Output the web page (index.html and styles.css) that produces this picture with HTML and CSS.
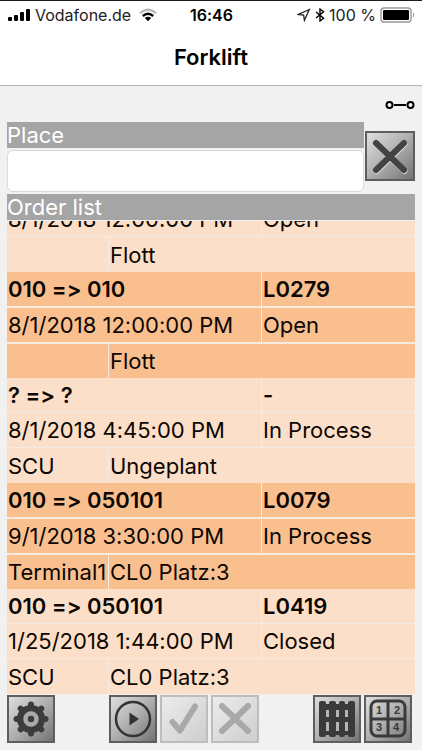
FILE: index.html
```html
<!DOCTYPE html>
<html lang="en">
<head>
<meta charset="utf-8">
<meta name="viewport" content="width=device-width, initial-scale=1">
<title>Forklift</title>
<link rel="stylesheet" href="styles.css">
</head>
<body>
<header class="top">
  <div class="status">
    <div class="status-side">
      <svg class="signal" viewBox="0 0 24 14" width="24" height="14"><rect x="1" y="9" width="4" height="4" rx="1"/><rect x="7" y="7" width="4" height="6" rx="1"/><rect x="13" y="4" width="4" height="9" rx="1"/><rect x="19" y="1" width="4" height="12" rx="1"/></svg>
      <span class="carrier">Vodafone.de</span>
      <svg viewBox="0 0 18 14" width="18" height="14" fill="none" stroke-width="2.4"><path d="M1 5.2Q9-1.8 17 5.2" stroke="#b9b9b9"/><path d="M3.8 8Q9 3.4 14.2 8" stroke="#000"/><path d="M5.8 10Q9 7.600 12.2 10L9 13.2z" fill="#000"/></svg>
    </div>
    <time class="clock">16:46</time>
    <div class="status-side status-right">
      <svg viewBox="0 0 14 14" width="14" height="14" fill="none" stroke="#222" stroke-width="1.3"><path d="M12.3 1.5L1.4 6.4L6.6 7L7.4 12.3z"/></svg>
      <svg viewBox="0 0 10 14" width="10" height="14" fill="none" stroke="#000" stroke-width="1.4"><path d="M1 4L8.6 10.2L5 13V1L8.6 3.8L1 10"/></svg>
      <span>100 %</span>
      <svg viewBox="0 0 36 16" width="36" height="16"><rect x="1" y="1" width="30" height="14" rx="3" fill="#fff" stroke="#999" stroke-width="1.4"/><rect x="3" y="3" width="26" height="10" rx="1" fill="#000"/><path d="M33 5.5Q35.4 8 33 10.5z" fill="#999"/></svg>
    </div>
  </div>
  <h1>Forklift</h1>
</header>
<main>
  <div class="link-state">
    <svg viewBox="0 0 30 10" width="30" height="10" fill="none" stroke="#000" stroke-width="2"><circle cx="4.5" cy="5" r="3"/><circle cx="25.5" cy="5" r="3"/><path d="M9 5H21"/></svg>
  </div>
  <form class="place">
    <div class="field">
      <label class="bar" for="place">Place</label>
      <input id="place" type="text">
    </div>
    <button class="tile clear" type="button" aria-label="Clear">
      <svg viewBox="2 2 46 46"><path d="M11.500 13L39.500 40M39.500 13L11.500 40" stroke="#ddd" stroke-width="6" stroke-linecap="round"/><path d="M11 12L39 39M39 12L11 39" stroke="#434343" stroke-width="6" stroke-linecap="round"/></svg>
    </button>
  </form>
  <h2 class="bar">Order list</h2>
  <div class="list">
    <table>
      <colgroup><col class="c1"><col class="c2"><col class="c2"></colgroup>
      <tbody class="light">
        <tr><td colspan="2">8/1/2018 12:00:00 PM</td><td>Open</td></tr>
        <tr><td></td><td colspan="2">Flott</td></tr>
      </tbody>
      <tbody class="dark">
        <tr><th colspan="2">010 =&gt; 010</th><th>L0279</th></tr>
        <tr><td colspan="2">8/1/2018 12:00:00 PM</td><td>Open</td></tr>
        <tr><td></td><td colspan="2">Flott</td></tr>
      </tbody>
      <tbody class="light">
        <tr><th colspan="2">? =&gt; ?</th><th>-</th></tr>
        <tr><td colspan="2">8/1/2018 4:45:00 PM</td><td>In Process</td></tr>
        <tr><td>SCU</td><td colspan="2">Ungeplant</td></tr>
      </tbody>
      <tbody class="dark">
        <tr><th colspan="2">010 =&gt; 050101</th><th>L0079</th></tr>
        <tr><td colspan="2">9/1/2018 3:30:00 PM</td><td>In Process</td></tr>
        <tr><td>Terminal1</td><td colspan="2">CL0 Platz:3</td></tr>
      </tbody>
      <tbody class="light">
        <tr><th colspan="2">010 =&gt; 050101</th><th>L0419</th></tr>
        <tr><td colspan="2">1/25/2018 1:44:00 PM</td><td>Closed</td></tr>
        <tr><td>SCU</td><td colspan="2">CL0 Platz:3</td></tr>
      </tbody>
    </table>
  </div>
  <div class="tools">
    <button class="tile" type="button" aria-label="Settings">
      <svg viewBox="2 2 44 44"><circle cx="24" cy="24" r="14" fill="#3c3c3c"/><path d="M24 9.500V38.500M9.500 24H38.500M13.700 13.700L34.300 34.300M34.300 13.700L13.700 34.300" stroke="#3c3c3c" stroke-width="6" stroke-linecap="round"/><circle cx="24" cy="24" r="5.500" fill="#3c3c3c" stroke="#aaa" stroke-width="4.500"/></svg>
    </button>
    <button class="tile col3" type="button" aria-label="Start">
      <svg viewBox="2 2 44 44"><circle cx="24" cy="24" r="17" fill="none" stroke="#333" stroke-width="2.500"/><path d="M20.500 17.500V30.500L30 24z" fill="#333"/></svg>
    </button>
    <button class="tile" type="button" aria-label="Confirm" disabled>
      <svg viewBox="2 2 44 44" fill="none" stroke="#a9a9a9" stroke-width="6" stroke-linecap="round" stroke-linejoin="round"><path d="M12.500 27L20 35.500L35 11.500"/></svg>
    </button>
    <button class="tile" type="button" aria-label="Cancel" disabled>
      <svg viewBox="2 2 44 44" fill="none" stroke="#a9a9a9" stroke-width="6" stroke-linecap="round"><path d="M11 11L37 36M37 11L11 36"/></svg>
    </button>
    <button class="tile col7" type="button" aria-label="Pallet">
      <svg viewBox="2 2 44 44"><g fill="#3a3a3a"><rect x="6" y="6" width="7" height="36" rx="2"/><rect x="16" y="6" width="7" height="36" rx="2"/><rect x="26" y="6" width="6" height="36" rx="2"/><rect x="35" y="6" width="7" height="36" rx="2"/><path d="M8 9H40V15H8zM8 22H40V27H8zM8 36H40V40H8z"/></g><path d="M13 15H16V22H13zM23 15H26V22H23zM32 15H35V22H32zM13 27H16V36H13zM23 27H26V36H23zM32 27H35V36H32z" fill="#b5b5b5"/></svg>
    </button>
    <button class="tile" type="button" aria-label="Numbers">
      <svg viewBox="2 2 44 44"><rect x="7" y="6" width="34" height="35" rx="6" fill="none" stroke="#3a3a3a" stroke-width="3"/><path d="M24 6V41M7 24H41" stroke="#3a3a3a" stroke-width="3"/><g class="digits"><text x="15" y="19">1</text><text x="33" y="19">2</text><text x="15" y="36">3</text><text x="32" y="36">4</text></g></svg>
    </button>
  </div>
</main>
</body>
</html>
```
FILE: styles.css
```css
* { box-sizing: border-box; }
body {
  margin: 0;
  height: 100vh;
  display: flex;
  flex-direction: column;
  background: #f1f1f1;
  color: #0c0703;
  font-family: Inter, "Liberation Sans", sans-serif;
  font-size: 22px;
  font-feature-settings: "calt" 0;
  font-variation-settings: "opsz" 24;
}
svg { display: block; }
.top {
  height: 86px;
  background: #fff;
  border-top: 1px solid #1c1c1e;
  border-bottom: 1px solid #b2b2b2;
}
.status {
  display: flex;
  align-items: center;
  height: 28px;
  padding: 0 6px 0 7px;
  font-size: 16px;
  color: #222;
}
.status-side { flex: 1; display: flex; align-items: center; gap: 4px; white-space: nowrap; }
.carrier { margin-right: 4px; }
.status-right { justify-content: flex-end; }
.clock { font-weight: 600; color: #000; }
h1 {
  margin: 0;
  color: #000;
  font-size: 22px;
  font-weight: 600;
  line-height: 56px;
  text-align: center;
}
main {
  flex: 1;
  min-height: 0;
  display: flex;
  flex-direction: column;
  padding: 0 7px 7px;
}
.link-state { display: flex; justify-content: flex-end; height: 36px; padding-top: 14px; }
.place { display: grid; grid-template-columns: 7fr 1fr; align-items: start; }
.bar {
  display: block;
  margin: 0;
  background: #a5a5a5;
  color: #fff;
  font-size: 22px;
  font-weight: 400;
  line-height: 26px;
}
.field input {
  display: block;
  width: 100%;
  height: 42px;
  margin: 2px 0;
  padding: 0 8px;
  border: 1px solid #dadada;
  border-radius: 6px;
  background: #fff;
  font: inherit;
}
.list {
  flex: 1;
  min-height: 0;
  display: flex;
  flex-direction: column;
  justify-content: flex-end;
  overflow: hidden;
  margin: 1px 0;
}
table { width: 100%; flex: none; table-layout: fixed; border-collapse: separate; border-spacing: 0; }
.c1 { width: 25%; }
.c2 { width: 37.5%; }
th, td {
  height: 35px;
  padding: 0 1px;
  border: 0 solid #f6eae1;
  line-height: 30px;
  text-align: left;
  vertical-align: middle;
  white-space: nowrap;
}
th { font-weight: 600; }
th:first-child, td:first-child { border-right-width: 1px; }
tr:not(:last-child) > * { border-bottom-width: 1px; }
.light { background: #fcdfc8; }
.dark { background: #fabf8f; }
.dark tr:not(:last-child) > * { height: 36px; border-bottom-width: 2px; }
.dark tr:last-child > * { height: 34px; }
.tools { display: grid; grid-template-columns: repeat(8, 1fr); }
.col3 { grid-column: 3; }
.col7 { grid-column: 7; }
.tile {
  width: 48px;
  height: 48px;
  padding: 0;
  border: 2px solid #5f5d5e;
  background: linear-gradient(135deg, #dedede 0%, #b5b4b4 45%, #757273 100%);
}
.tile svg { width: 100%; height: 100%; }
.tile:disabled { border-color: #bdbdbd; background: linear-gradient(135deg, #ececec, #cecece); }
.clear { width: 50px; height: 50px; margin-top: 9px; justify-self: end; }
.digits { fill: #3a3a3a; font-size: 11px; font-weight: 700; text-anchor: middle; }
```
